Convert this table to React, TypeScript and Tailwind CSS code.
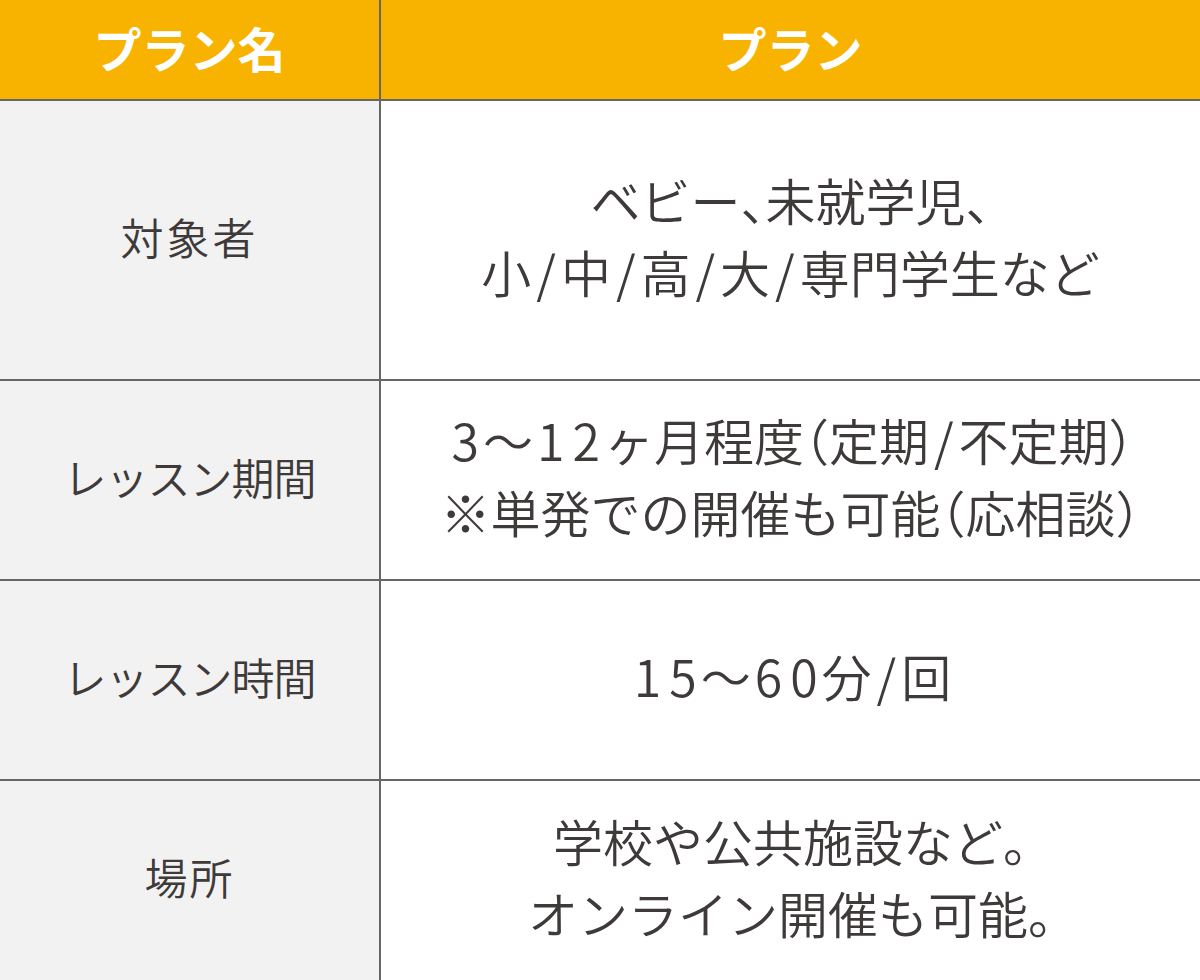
import React from 'react'

const font = { fontFamily: '"Noto Sans CJK JP", "Noto Sans", sans-serif' }

interface Row {
  label: string
  labelClass: string
  lines: Array<string>
}

const rows: Array<Row> = [
  {
    label: '対象者',
    labelClass: 'tracking-[3px]',
    lines: ['ベビー、未就学児、', '小/中/高/大/専門学生など'],
  },
  {
    label: 'レッスン期間',
    labelClass: 'tracking-[-1px]',
    lines: ['3〜12ヶ月程度（定期/不定期）', '※単発での開催も可能（応相談）'],
  },
  { label: 'レッスン時間', labelClass: 'tracking-[-1px]', lines: ['15〜60分/回'] },
  {
    label: '場所',
    labelClass: 'tracking-[2px]',
    lines: ['学校や公共施設など。', 'オンライン開催も可能。'],
  },
]

// half-width glyphs in the picture sit wider, punctuation sits tighter
function Line({ text }: { text: string }) {
  return (
    <div className="whitespace-nowrap">
      {Array.from(text).map((ch, i) => {
        if (/[0-9]/.test(ch)) {
          return (
            <span key={i} className="px-[4px]">
              {ch}
            </span>
          )
        }
        if (ch === '/') {
          return (
            <span key={i} className="px-[5px]">
              {ch}
            </span>
          )
        }
        if ('、。（）'.includes(ch)) {
          return (
            <span key={i} className="[font-feature-settings:'halt']">
              {ch}
            </span>
          )
        }
        return <React.Fragment key={i}>{ch}</React.Fragment>
      })}
    </div>
  )
}

export default function App() {
  return (
    <div
      className="w-[1200px] h-[980px] grid grid-cols-[379px_1fr] grid-rows-[99px_278px_198px_198px_199px] gap-[2px] bg-[#666666]"
      style={font}
    >
      <div className="bg-[#f8b200] flex items-center justify-center text-white font-bold text-[48px] pb-[6px]">
        プラン名
      </div>
      <div className="bg-[#f8b200] flex items-center justify-center text-white font-bold text-[48px] pb-[6px]">
        プラン
      </div>
      {rows.map((row) => (
        <React.Fragment key={row.label}>
          <div
            className={`bg-[#f2f2f2] flex items-center justify-center text-[#3e3a39] font-[350] text-[43px] pb-[8px] ${row.labelClass}`}
          >
            {row.label}
          </div>
          <div className="bg-white flex flex-col items-center justify-center text-[#3e3a39] font-[350] text-[50px] leading-[72px] pb-[10px]">
            {row.lines.map((line) => (
              <Line key={line} text={line} />
            ))}
          </div>
        </React.Fragment>
      ))}
    </div>
  )
}
